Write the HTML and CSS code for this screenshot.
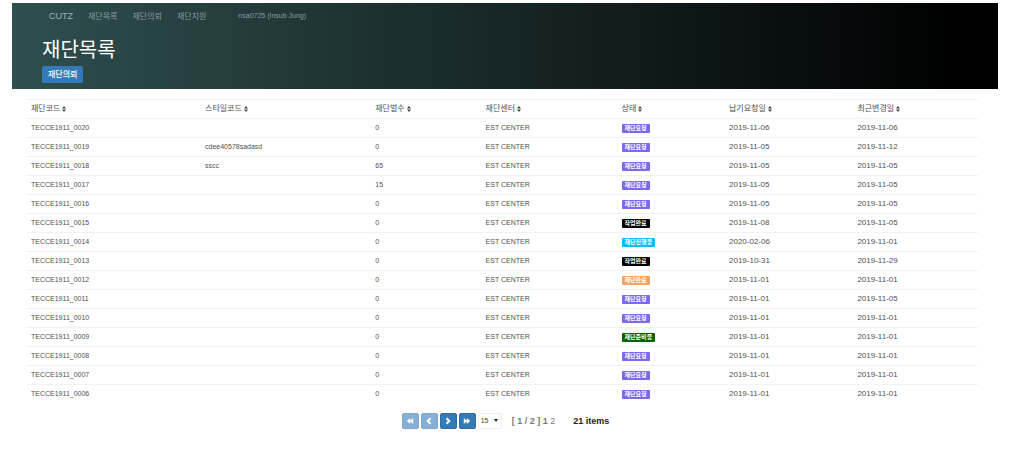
FILE: index.html
```
<!DOCTYPE html>
<html lang="ko">
<head>
<meta charset="utf-8">
<title>CUTZ - 재단목록</title>
<link rel="stylesheet" href="styles.css">
</head>
<body>
<header class="hero">
  <nav class="nav">
    <a class="brand" href="#">CUTZ</a>
    <a href="#">재단목록</a>
    <a href="#">재단의뢰</a>
    <a href="#">재단지원</a>
    <a class="user" href="#">nsa0725 (Insub Jung)</a>
  </nav>
  <div class="heading">
    <h1>재단목록</h1>
    <button type="button" class="request">재단의뢰</button>
  </div>
</header>
<main class="content">
  <table class="list">
    <colgroup><col class="c-code"><col class="c-style"><col class="c-count"><col class="c-center"><col class="c-state"><col class="c-due"><col class="c-changed"></colgroup>
    <thead><tr id="head"></tr></thead>
    <tbody id="rows"></tbody>
  </table>
  <div class="pager">
    <button type="button" disabled aria-label="처음"><svg viewBox="0 0 8 8"><path d="M4.200 1v6L0.800 4zM7.200 1v6L3.800 4z"/></svg></button>
    <button type="button" disabled aria-label="이전"><svg viewBox="0 0 8 8"><path class="line" d="M5.500 1.200L2.700 4l2.800 2.800"/></svg></button>
    <button type="button" aria-label="다음"><svg viewBox="0 0 8 8"><path class="line" d="M2.500 1.200L5.300 4 2.500 6.800"/></svg></button>
    <button type="button" aria-label="마지막"><svg viewBox="0 0 8 8"><path d="M0.800 1v6L4.200 4zM3.800 1v6L7.200 4z"/></svg></button>
    <span class="size"><select aria-label="페이지 크기"><option>15</option><option>30</option></select></span>
    <span class="pages">[ 1 / 2 ] <b>1</b> <a href="#">2</a></span>
    <span class="total">21 items</span>
  </div>
</main>
<script src="list.js"></script>
</body>
</html>
```
FILE: styles.css
```
* { box-sizing: border-box; }
body {
  margin: 3px 17px 0 12px;
  background: #fff;
  color: #505050;
  font-family: "Liberation Sans", "Noto Sans CJK KR", sans-serif;
  font-size: 7px;
}
a { color: inherit; text-decoration: none; }
button, select { font: inherit; }
.hero {
  padding: 0 30px 6px;
  background: linear-gradient(to right, #2f4f4f, #000 96%);
}
.nav {
  display: flex;
  align-items: center;
  gap: 15px;
  height: 25px;
  padding-left: 7px;
  color: #8b9c9c;
  font-size: 8px;
}
.brand { color: #a3b0b0; font-size: 9px; }
.user { margin-left: 17px; font-size: 7px; }
.heading {
  display: flex;
  flex-direction: column;
  align-items: flex-start;
  gap: 1px;
  padding-top: 8px;
}
h1 {
  margin: 0;
  color: #fff;
  font-size: 20px;
  font-weight: 400;
  line-height: 29px;
}
.request {
  height: 17px;
  padding: 0 6px;
  border: 0;
  border-radius: 2px;
  background: #337ab7;
  color: #fff;
  font-size: 8px;
  font-weight: 500;
  line-height: 17px;
}
.content { padding: 10px 20px 0 15px; }
.list {
  width: 100%;
  border-collapse: collapse;
  table-layout: fixed;
}
.c-code { width: 18.3%; }
.c-style { width: 17.9%; }
.c-count { width: 11.6%; }
.c-center { width: 14.3%; }
.c-state { width: 11.3%; }
.c-due { width: 13.5%; }
.c-changed { width: 13.1%; }
.list th, .list td {
  height: 19px;
  padding: 0 4px;
  border-top: 1px solid #f2f2f2;
  text-align: left;
  vertical-align: middle;
  line-height: 12px;
  white-space: nowrap;
}
.list th { font-size: 8px; font-weight: 400; }
.list .date { font-size: 8px; }
.sort {
  width: 4px;
  height: 6px;
  margin-left: 2px;
  vertical-align: middle;
  fill: #444;
}
.badge {
  display: inline-block;
  height: 9px;
  padding: 0 3px;
  border-radius: 1px;
  color: #fff;
  font-size: 6px;
  font-weight: 700;
  line-height: 9px;
  vertical-align: middle;
}
.requested { background: #7b68ee; }
.finished { background: #000; }
.working { background: #00bfff; }
.cut { background: #f4a460; }
.preparing { background: #006400; }
.pager {
  display: flex;
  justify-content: center;
  align-items: center;
  gap: 2px;
  padding: 9px 0 0 6px;
}
.pager button {
  display: flex;
  justify-content: center;
  align-items: center;
  width: 17px;
  height: 16px;
  padding: 0;
  border: 1px solid #2e6da4;
  border-radius: 2px;
  background: #337ab7;
}
.pager button:disabled { border-color: #82a7c8; background: #85afd4; }
.pager svg { width: 8px; height: 8px; fill: #fff; }
.pager .line { fill: none; stroke: #fff; stroke-width: 2; }
.size {
  display: flex;
  align-items: center;
  position: relative;
}
.size::after {
  content: "";
  position: absolute;
  right: 4px;
  border: 2px solid transparent;
  border-top: 3px solid #222;
  border-bottom: 0;
  pointer-events: none;
}
.size select {
  width: 24px;
  height: 16px;
  padding: 0 2px;
  border: 1px solid #eee;
  border-radius: 2px;
  appearance: none;
  background: #fff;
  color: #444;
}
.pages {
  margin-left: 8px;
  color: #777;
  font-size: 9px;
  font-weight: 700;
}
.pages a { font-weight: 400; }
.total {
  margin-left: 16px;
  color: #222;
  font-size: 9px;
  font-weight: 700;
}
```
FILE: list.js
```
const heads = ["재단코드", "스타일코드", "재단벌수", "재단센터", "상태", "납기요청일", "최근변경일"];
const labels = {
  requested: "재단요청",
  finished: "작업완료",
  working: "재단진행중",
  cut: "재단완료",
  preparing: "재단준비중"
};
const items = [
  ["0020", "", 0, "requested", "2019-11-06", "2019-11-06"],
  ["0019", "cdee40578sadasd", 0, "requested", "2019-11-05", "2019-11-12"],
  ["0018", "sscc", 65, "requested", "2019-11-05", "2019-11-05"],
  ["0017", "", 15, "requested", "2019-11-05", "2019-11-05"],
  ["0016", "", 0, "requested", "2019-11-05", "2019-11-05"],
  ["0015", "", 0, "finished", "2019-11-08", "2019-11-05"],
  ["0014", "", 0, "working", "2020-02-06", "2019-11-01"],
  ["0013", "", 0, "finished", "2019-10-31", "2019-11-29"],
  ["0012", "", 0, "cut", "2019-11-01", "2019-11-01"],
  ["0011", "", 0, "requested", "2019-11-01", "2019-11-05"],
  ["0010", "", 0, "requested", "2019-11-01", "2019-11-01"],
  ["0009", "", 0, "preparing", "2019-11-01", "2019-11-01"],
  ["0008", "", 0, "requested", "2019-11-01", "2019-11-01"],
  ["0007", "", 0, "requested", "2019-11-01", "2019-11-01"],
  ["0006", "", 0, "requested", "2019-11-01", "2019-11-01"]
];
const sortIcon = '<svg class="sort" viewBox="0 0 4 6"><path d="M0 2.500L2 0l2 2.500zM0 3.500h4L2 6z"/></svg>';
document.getElementById("head").innerHTML = heads.map(h => `<th scope="col">${h}${sortIcon}</th>`).join("");
document.getElementById("rows").innerHTML = items.map(([code, style, count, state, due, changed]) =>
  `<tr><td>TECCE1911_${code}</td><td>${style}</td><td>${count}</td><td>EST CENTER</td>` +
  `<td><span class="badge ${state}">${labels[state]}</span></td>` +
  `<td class="date">${due}</td><td class="date">${changed}</td></tr>`).join("");
```
